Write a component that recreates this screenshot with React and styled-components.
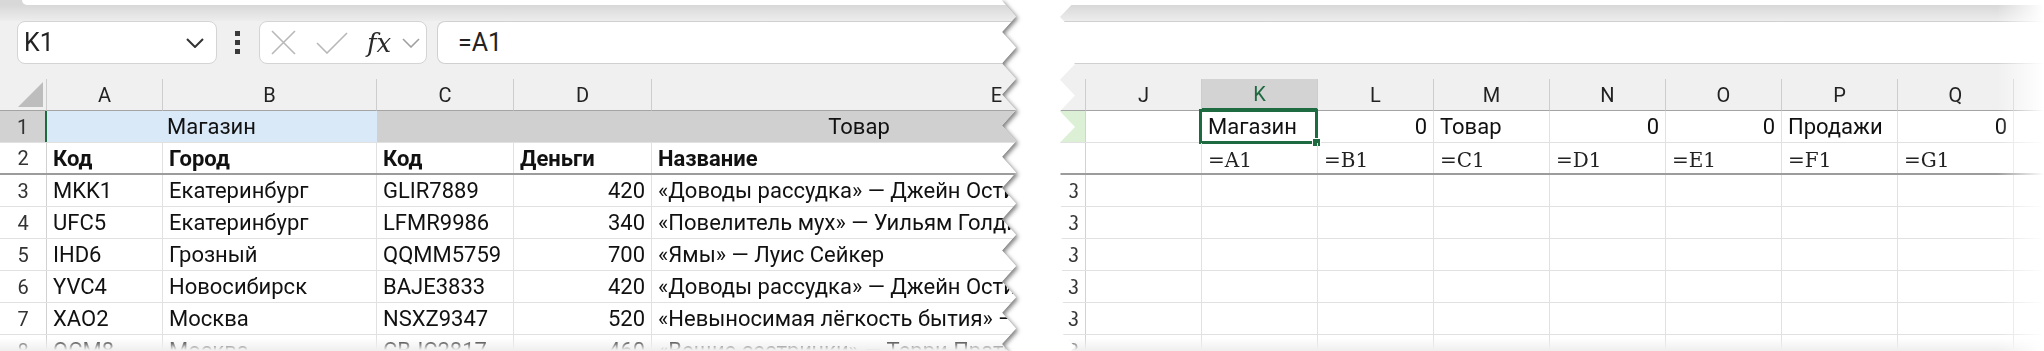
import React from 'react';
import styled, { createGlobalStyle } from 'styled-components';

const GlobalStyle = createGlobalStyle`
  *, *::before, *::after { box-sizing: border-box; }
  html, body { margin: 0; padding: 0; background: #fff; }
  body { font-family: Roboto, "Noto Sans", sans-serif; color: #111; }
`;

const PAGE_H = 351;

// torn edge points, top to bottom
const zigzag = (outer, inner, start, period) => {
  const pts = [];
  for (let i = 0, y = start; y < PAGE_H + period; i++, y += period / 2) {
    pts.push(`${i % 2 ? inner : outer}px ${y.toFixed(1)}px`);
  }
  return pts;
};

const leftTear = ['-10px -20px', ...zigzag(1016, 1002, -14.8, 31.2), '-10px 400px'].join(', ');
const rightTear = ['1100px -20px', ...zigzag(1, 16, -14.4, 31.4), '1100px 400px'].join(', ');

const LEFT_COLS = '47px 116px 214px 137px 138px 690px';
const RIGHT_COLS = '27px repeat(9, 116px)';

const Page = styled.div`
  display: flex;
  width: 2044px;
  height: ${PAGE_H}px;
  overflow: hidden;
  background: #fff;
`;

const LeftShadow = styled.div`
  flex: 0 0 1016px;
  min-width: 0;
  height: 100%;
  filter: drop-shadow(2px 2px 2px rgba(0, 0, 0, 0.5));
`;

const Panel = styled.div`
  display: flex;
  flex-direction: column;
  height: 100%;
  min-width: 0;
  background: #f0f0f0;
  overflow: hidden;
  clip-path: polygon(${(p) => p.$tear});
`;

const RightPanel = styled(Panel)`
  flex: 0 0 985px;
  margin-left: 43px;
  mask-image: linear-gradient(to right, #000 938px, transparent 985px);
`;

const TopStrip = styled.div`
  flex: 0 0 21px;
  background: linear-gradient(to bottom, #d8d8d8 5px, #ededed 21px);
`;

const RibbonEdge = styled.div`
  height: 5px;
  margin-left: ${(p) => p.$inset}px;
  background: #fff;
  border-bottom-left-radius: ${(p) => (p.$inset ? 7 : 0)}px;
`;

const FormulaBar = styled.div`
  flex: 0 0 43px;
  display: flex;
  align-items: stretch;
`;

const NameBox = styled.div`
  width: 200px;
  margin-left: 17px;
  display: flex;
  align-items: center;
  justify-content: space-between;
  padding: 0 12px 0 6px;
  background: #fff;
  border: 1px solid #d4d4d4;
  border-radius: 8px;
  font-size: 25px;
  color: #222;
`;

const Dots = styled.div`
  display: flex;
  flex-direction: column;
  justify-content: center;
  gap: 4px;
  margin: 0 19px 0 18px;

  span {
    width: 5px;
    height: 5px;
    background: #3a3a3a;
  }
`;

const FxBox = styled.div`
  width: 168px;
  display: flex;
  align-items: center;
  padding-left: 11px;
  background: #fff;
  border: 1px solid #d4d4d4;
  border-radius: 8px;
`;

const Fx = styled.span`
  margin: 0 11px 0 19px;
  font-family: "DejaVu Serif", "Liberation Serif", serif;
  font-style: italic;
  font-size: 26px;
  line-height: 1;
  color: #2a2a2a;
`;

const FormulaInput = styled.div`
  flex: 1;
  display: flex;
  align-items: center;
  margin-left: ${(p) => (p.$open ? 0 : 10)}px;
  padding-left: ${(p) => (p.$open ? 0 : 20)}px;
  background: #fff;
  border: 1px solid #d0d0d0;
  border-right: none;
  border-left-width: ${(p) => (p.$open ? 0 : 1)}px;
  border-radius: ${(p) => (p.$open ? '0' : '8px 0 0 8px')};
  font-size: 25px;
  color: #222;
`;

const HeaderSpacer = styled.div`
  flex: 0 0 15px;
`;

const Sheet = styled.div`
  flex: 1;
  min-height: 0;
  overflow: hidden;
  mask-image: linear-gradient(to bottom, #000 calc(100% - 13px), transparent calc(100% - 1px));
`;

const HeaderRow = styled.div`
  display: grid;
  grid-template-columns: ${(p) => p.$cols};
  height: 32px;
`;

const ColHead = styled.div`
  display: flex;
  align-items: center;
  justify-content: center;
  background: ${(p) => (p.$active ? '#d3d3d3' : '#f0f0f0')};
  border-right: 1px solid #cdcdcd;
  border-bottom: ${(p) => (p.$active ? '3px solid #1e6b41' : '1px solid #a4a4a4')};
  font-size: 20px;
  color: ${(p) => (p.$active ? '#1e6b41' : '#222')};
`;

const Corner = styled(ColHead)`
  align-items: flex-end;
  justify-content: flex-end;
  padding: 0 3px 3px 0;

  &::after {
    content: '';
    border-left: 25px solid transparent;
    border-bottom: 25px solid #bdbdbd;
  }
`;

const Row = styled.div`
  display: grid;
  grid-template-columns: ${(p) => p.$cols};
  height: 32px;
  background: #fff;
  border-bottom: ${(p) => (p.$freeze ? '2px solid #9c9c9c' : '1px solid #e1e1e1')};
`;

const RowHead = styled.div`
  display: flex;
  align-items: center;
  justify-content: ${(p) => (p.$clip ? 'flex-end' : 'center')};
  padding-right: ${(p) => (p.$clip ? 6 : 0)}px;
  overflow: hidden;
  background: ${(p) => p.$bg || '#fff'};
  border-right: ${(p) => (p.$mark ? '2px solid #1e6b41' : '1px solid #d2d2d2')};
  font-size: 20px;
  color: #333;
`;

const Cell = styled.div`
  grid-column: span ${(p) => p.$span || 1};
  position: relative;
  display: flex;
  align-items: center;
  justify-content: ${(p) => ({ right: 'flex-end', center: 'center' }[p.$align] || 'flex-start')};
  padding: 0 6px;
  overflow: ${(p) => (p.$active ? 'visible' : 'hidden')};
  white-space: nowrap;
  background: ${(p) => p.$bg || 'transparent'};
  border-right: 1px solid ${(p) => (p.$bg ? p.$bg : '#e1e1e1')};
  font-size: 22px;
  font-weight: ${(p) => (p.$bold ? 700 : 400)};
`;

const Formula = styled(Cell)`
  padding-top: 4px;
  font-family: "DejaVu Serif", "Liberation Serif", serif;
  font-size: 20px;
  color: #222;
`;

const Selection = styled.div`
  position: absolute;
  inset: -2px -1px -2px -3px;
  border: 3px solid #1e6b41;
  pointer-events: none;

  &::after {
    content: '';
    position: absolute;
    right: -6px;
    bottom: -6px;
    width: 9px;
    height: 9px;
    background: #1e6b41;
    border: 1px solid #fff;
  }
`;

const ChevronIcon = ({ color = '#333', width = 2 }) => (
  <svg width="18" height="10" viewBox="0 0 18 10" fill="none">
    <path d="M1 1l8 8 8-8" stroke={color} strokeWidth={width} />
  </svg>
);

const CancelIcon = () => (
  <svg width="25" height="25" viewBox="0 0 25 25" fill="none">
    <path d="M1 1l23 23M24 1L1 24" stroke="#b8b8b8" strokeWidth="1.6" />
  </svg>
);

const EnterIcon = () => (
  <svg width="32" height="22" viewBox="0 0 32 22" fill="none" style={{ marginLeft: 20 }}>
    <path d="M1 11l10 10L31 1" stroke="#b8b8b8" strokeWidth="1.6" />
  </svg>
);

const leftRows = [
  ['MKK1', 'Екатеринбург', 'GLIR7889', '420', '«Доводы рассудка» — Джейн Остин'],
  ['UFC5', 'Екатеринбург', 'LFMR9986', '340', '«Повелитель мух» — Уильям Голдинг'],
  ['IHD6', 'Грозный', 'QQMM5759', '700', '«Ямы» — Луис Сейкер'],
  ['YVC4', 'Новосибирск', 'BAJE3833', '420', '«Доводы рассудка» — Джейн Остин'],
  ['XAO2', 'Москва', 'NSXZ9347', '520', '«Невыносимая лёгкость бытия» — Милан Кундера'],
  ['QCM8', 'Москва', 'CBJC2817', '460', '«Вещие сестрички» — Терри Пратчетт'],
];

const rightCols = ['J', 'K', 'L', 'M', 'N', 'O', 'P', 'Q', ''];
const rightValues = [
  ['', 'left'],
  ['Магазин', 'left'],
  ['0', 'right'],
  ['Товар', 'left'],
  ['0', 'right'],
  ['0', 'right'],
  ['Продажи', 'left'],
  ['0', 'right'],
  ['', 'left'],
];
const rightFormulas = ['', '=A1', '=B1', '=C1', '=D1', '=E1', '=F1', '=G1', ''];

const LeftSheet = () => (
  <LeftShadow>
    <Panel $tear={leftTear}>
      <TopStrip>
        <RibbonEdge $inset={22} />
      </TopStrip>
      <FormulaBar>
        <NameBox>
          K1
          <ChevronIcon />
        </NameBox>
        <Dots>
          <span />
          <span />
          <span />
        </Dots>
        <FxBox>
          <CancelIcon />
          <EnterIcon />
          <Fx>fx</Fx>
          <ChevronIcon color="#a0a0a0" width={1.6} />
        </FxBox>
        <FormulaInput>=A1</FormulaInput>
      </FormulaBar>
      <HeaderSpacer />
      <Sheet>
        <HeaderRow $cols={LEFT_COLS}>
          <Corner />
          {['A', 'B', 'C', 'D', 'E'].map((c) => (
            <ColHead key={c}>{c}</ColHead>
          ))}
        </HeaderRow>
        <Row $cols={LEFT_COLS}>
          <RowHead $bg="#d2d2d2" $mark>1</RowHead>
          <Cell $span={2} $align="center" $bg="#dae9f8">Магазин</Cell>
          <Cell $span={3} $align="center" $bg="#d0d0d0">Товар</Cell>
        </Row>
        <Row $cols={LEFT_COLS} $freeze>
          <RowHead>2</RowHead>
          {['Код', 'Город', 'Код', 'Деньги', 'Название'].map((t, i) => (
            <Cell key={i} $bold>{t}</Cell>
          ))}
        </Row>
        {leftRows.map((r, i) => (
          <Row key={i} $cols={LEFT_COLS}>
            <RowHead>{i + 3}</RowHead>
            <Cell>{r[0]}</Cell>
            <Cell>{r[1]}</Cell>
            <Cell>{r[2]}</Cell>
            <Cell $align="right">{r[3]}</Cell>
            <Cell>{r[4]}</Cell>
          </Row>
        ))}
      </Sheet>
    </Panel>
  </LeftShadow>
);

const RightSheet = () => (
  <RightPanel $tear={rightTear}>
    <TopStrip>
      <RibbonEdge $inset={0} />
    </TopStrip>
    <FormulaBar>
      <FormulaInput $open />
    </FormulaBar>
    <HeaderSpacer />
    <Sheet>
      <HeaderRow $cols={RIGHT_COLS}>
        <ColHead />
        {rightCols.map((c, i) => (
          <ColHead key={i} $active={c === 'K'}>{c}</ColHead>
        ))}
      </HeaderRow>
      <Row $cols={RIGHT_COLS}>
        <RowHead $bg="#dcf0d6" />
        {rightValues.map(([t, align], i) => (
          <Cell key={i} $align={align} $active={i === 1}>
            {t}
            {i === 1 && <Selection />}
          </Cell>
        ))}
      </Row>
      <Row $cols={RIGHT_COLS} $freeze>
        <RowHead />
        {rightFormulas.map((t, i) => (
          <Formula key={i}>{t}</Formula>
        ))}
      </Row>
      {[3, 4, 5, 6, 7, 8].map((n) => (
        <Row key={n} $cols={RIGHT_COLS}>
          <RowHead $clip>3</RowHead>
          {rightCols.map((c, i) => (
            <Cell key={i} />
          ))}
        </Row>
      ))}
    </Sheet>
  </RightPanel>
);

export default function App() {
  return (
    <>
      <GlobalStyle />
      <Page>
        <LeftSheet />
        <RightSheet />
      </Page>
    </>
  );
}
